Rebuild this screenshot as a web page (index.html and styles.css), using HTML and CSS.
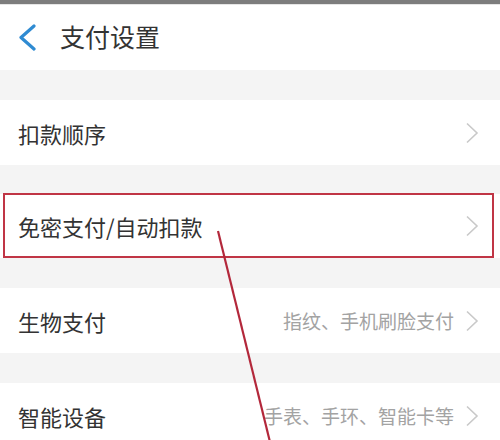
FILE: index.html
```html
<!DOCTYPE html>
<html lang="zh-CN">
<head>
<meta charset="utf-8">
<title>支付设置</title>
<link rel="stylesheet" href="styles.css">
</head>
<body>
<div class="page">
  <div class="status"></div>
  <header class="header">
    <svg class="back" width="20" height="28" viewBox="0 0 20 28"><polyline points="16,3 3,14.5 16,26" fill="none" stroke="#2f8bd2" stroke-width="3.2" stroke-linecap="round" stroke-linejoin="round"/></svg>
    <span class="title">支付设置</span>
  </header>
  <div class="list">
    <div class="row"><span class="label">扣款顺序</span><span class="right"><svg class="chev" width="16" height="22" viewBox="0 0 16 22"><polyline points="3,1.5 13,11 3,20.5" fill="none" stroke="#c9c9c9" stroke-width="1.6"/></svg></span></div>
    <div class="row marked"><span class="label">免密支付/自动扣款</span><span class="right"><svg class="chev" width="16" height="22" viewBox="0 0 16 22"><polyline points="3,1.5 13,11 3,20.5" fill="none" stroke="#c9c9c9" stroke-width="1.6"/></svg></span></div>
    <div class="row"><span class="label">生物支付</span><span class="right"><span class="sub">指纹、手机刷脸支付</span><svg class="chev" width="16" height="22" viewBox="0 0 16 22"><polyline points="3,1.5 13,11 3,20.5" fill="none" stroke="#c9c9c9" stroke-width="1.6"/></svg></span></div>
    <div class="row"><span class="label">智能设备</span><span class="right"><span class="sub">手表、手环、智能卡等</span><svg class="chev" width="16" height="22" viewBox="0 0 16 22"><polyline points="3,1.5 13,11 3,20.5" fill="none" stroke="#c9c9c9" stroke-width="1.6"/></svg></span></div>
  </div>
  <svg class="arrow" width="500" height="440" viewBox="0 0 500 440"><line x1="218" y1="231" x2="270" y2="442" stroke="#b3283b" stroke-width="2.2"/></svg>
</div>
</body>
</html>
```
FILE: styles.css
```css
html, body {
  margin: 0;
  padding: 0;
}
body {
  background: #f4f4f4;
  font-family: "Noto Sans CJK SC", "Noto Sans", sans-serif;
  color: #333;
  width: 500px;
  height: 440px;
  overflow: hidden;
}
.page {
  position: relative;
  width: 500px;
  height: 440px;
}
.status {
  height: 4px;
  background: #7d7d7d;
  border-bottom: 1px solid #e6e6e6;
}
.header {
  height: 65px;
  background: #fff;
  display: flex;
  align-items: center;
  padding-left: 18px;
  gap: 22px;
}
.back {
  display: block;
  margin-top: -2px;
}
.title {
  font-size: 25px;
  line-height: 1;
  color: #333;
  margin-top: -3px;
}
.list {
  display: flex;
  flex-direction: column;
  gap: 30px;
  padding-top: 30px;
}
.row {
  height: 65px;
  background: #fff;
  display: flex;
  align-items: center;
  justify-content: space-between;
  padding: 0 20px 0 18px;
  position: relative;
}
.row.marked {
  height: 64px;
  margin-top: -1px;
}
.row.marked::after {
  content: "";
  position: absolute;
  left: 3px;
  right: 6px;
  top: -1px;
  bottom: 0;
  border: 2px solid #c03545;
}
.label {
  font-size: 22px;
  line-height: 1;
  color: #333;
}
.right {
  display: flex;
  align-items: center;
  gap: 10px;
}
.sub {
  font-size: 19px;
  line-height: 1;
  color: #a3a3a3;
}
.chev {
  display: block;
}
.arrow {
  position: absolute;
  left: 0;
  top: 0;
  pointer-events: none;
}
```
